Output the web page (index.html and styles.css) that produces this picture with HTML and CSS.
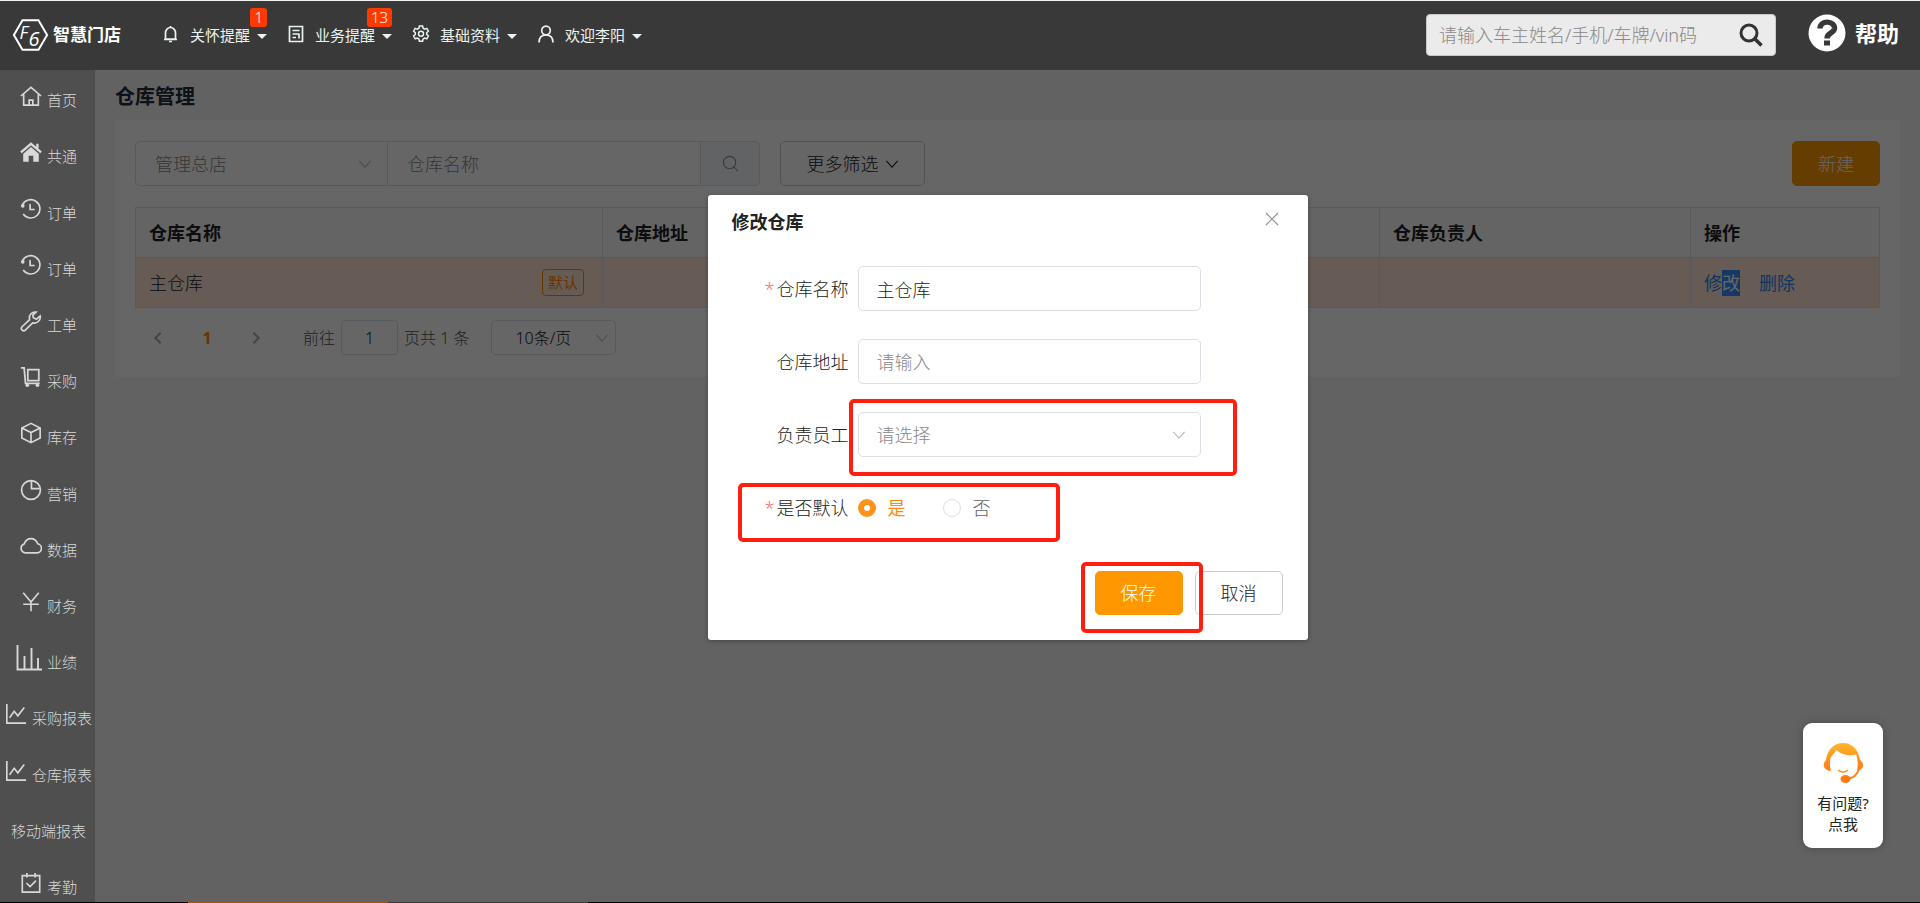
FILE: index.html
```html
<!DOCTYPE html>
<html lang="zh-CN">
<head>
<meta charset="utf-8">
<title>仓库管理</title>
<link rel="stylesheet" href="styles.css">
</head>
<body>
<svg class="sprite" aria-hidden="true">
  <symbol id="chevron" viewBox="0 0 16 16"><path d="M1.5 4.5 8 11.5 14.5 4.5" fill="none" stroke="currentColor" stroke-width="1.3"/></symbol>
  <symbol id="chevron-bold" viewBox="0 0 16 16"><path d="M2 5 8 11 14 5" fill="none" stroke="currentColor" stroke-width="2.4"/></symbol>
  <symbol id="history" viewBox="0 0 24 24"><path d="M2.5 8A10 10 0 1 1 3.5 17.5" fill="none" stroke="currentColor" stroke-width="1.8"/><path d="M11 6.5V12.5H16" fill="none" stroke="currentColor" stroke-width="1.8"/><circle cx="3" cy="8.5" r="2" fill="currentColor"/></symbol>
  <symbol id="trend" viewBox="0 0 24 24"><path d="M2 1V22H23M5 16 10 9 14 14 21 5" fill="none" stroke="currentColor" stroke-width="1.8"/></symbol>
</svg>
<header class="topbar">
  <a class="brand" href="#">
    <svg class="brand-mark" viewBox="0 0 36 32"><path d="M10 1.2H26L34.6 16 26 30.8H10L1.4 16Z" fill="none" stroke="#fff" stroke-width="2"/><text x="7" y="20" font-size="18">F</text><text x="16" y="27" font-size="20">6</text></svg>
    <span>智慧门店</span>
  </a>
  <nav class="menu">
    <a class="menu-item" href="#"><svg viewBox="0 0 18 18"><path d="M3.5 14V8a5 5.500 0 0 1 10 0V14ZM2 14.500H15M8.500 1V2.500M7 16.500H10" fill="none" stroke="currentColor" stroke-width="1.700"/></svg><span>关怀提醒</span><i class="caret"></i><b class="badge">1</b></a>
    <a class="menu-item" href="#"><svg viewBox="0 0 18 18"><path d="M2.500 1.500H15.500V16.500H2.500ZM5.500 5.500H12.500M5.500 9H12.500M5.500 12.500H9M12 9V13.500" fill="none" stroke="currentColor" stroke-width="1.700"/></svg><span>业务提醒</span><i class="caret"></i><b class="badge">13</b></a>
    <a class="menu-item" href="#"><svg viewBox="0 0 18 18"><path d="M7.400 1h3.200l.5 2.200 1.500.9 2.200-.7 1.600 2.800-1.700 1.500v1.800l1.700 1.500-1.600 2.800-2.200-.7-1.500.9-.5 2.200H7.400l-.5-2.200-1.500-.9-2.200.7-1.600-2.800 1.700-1.500V7.700L1.600 6.200l1.600-2.800 2.200.7 1.500-.9Z" fill="none" stroke="currentColor" stroke-width="1.500"/><circle cx="9" cy="8.700" r="2.500" fill="none" stroke="currentColor" stroke-width="1.500"/></svg><span>基础资料</span><i class="caret"></i></a>
    <a class="menu-item" href="#"><svg viewBox="0 0 18 18"><circle cx="9" cy="5.500" r="4.300" fill="none" stroke="currentColor" stroke-width="1.700"/><path d="M2 17.500C2 12.500 5 10 9 10s7 2.500 7 7.500" fill="none" stroke="currentColor" stroke-width="1.700"/></svg><span>欢迎李阳</span><i class="caret"></i></a>
  </nav>
  <form class="finder">
    <input type="text" aria-label="搜索" placeholder="请输入车主姓名/手机/车牌/vin码">
    <button type="button" aria-label="搜索"><svg viewBox="0 0 24 24"><circle cx="10" cy="10" r="8" fill="none" stroke="currentColor" stroke-width="3"/><path d="M15.500 15.500 22.500 22.500" stroke="currentColor" stroke-width="3.500"/></svg></button>
  </form>
  <a class="help" href="#"><svg viewBox="0 0 38 38"><circle cx="19" cy="19" r="18.500" fill="#fff"/><path d="M12 14.500C12 5.500 27 6.500 26.500 14.500 26 19.500 19 18.500 19 24.500" fill="none" stroke="#393939" stroke-width="5.400"/><rect x="16" y="26.500" width="6" height="5" fill="#393939"/></svg><span>帮助</span></a>
</header>
<div class="workspace">
  <aside class="sidebar">
    <a href="#"><svg viewBox="0 0 24 24"><path d="M1 12 12 2.500 23 12M4 10V22H20V10M10 22V16.500H14V22" fill="none" stroke="currentColor" stroke-width="1.800"/></svg><span>首页</span></a>
    <a href="#"><svg viewBox="0 0 24 24"><path d="M12 6.500 20.500 14V22.500H14.500V16H9.500V22.500H3.500V14Z" fill="currentColor"/><path d="M1 12.500 12 3 23 12.500M19 3V8" fill="none" stroke="currentColor" stroke-width="2.600"/></svg><span>共通</span></a>
    <a href="#"><svg><use href="#history"/></svg><span>订单</span></a>
    <a href="#"><svg><use href="#history"/></svg><span>订单</span></a>
    <a href="#"><svg viewBox="0 0 24 24"><path d="M17.500 2.200A6.500 6.500 0 0 0 10.500 10.500L2 18.500a2.600 2.600 0 0 0 3.800 3.500L13.800 14A6.500 6.500 0 0 0 22 6.500L18 10 14.500 8.500 14 5.500Z" fill="none" stroke="currentColor" stroke-width="1.800"/></svg><span>工单</span></a>
    <a href="#"><svg viewBox="0 0 24 24"><path d="M1 2H4.500L6 19H21.500M8.500 4H20.500V16H8.500Z" fill="none" stroke="currentColor" stroke-width="1.900"/><circle cx="8" cy="21" r="2" fill="currentColor"/><circle cx="19" cy="21" r="2" fill="currentColor"/></svg><span>采购</span></a>
    <a href="#"><svg viewBox="0 0 24 24"><path d="M12 1.500 22 6.500V17.500L12 22.500 2 17.500V6.500ZM2 6.500 12 11.500 22 6.500M12 11.500V22.500" fill="none" stroke="currentColor" stroke-width="1.800"/></svg><span>库存</span></a>
    <a href="#"><svg viewBox="0 0 24 24"><circle cx="12" cy="12" r="10.300" fill="none" stroke="currentColor" stroke-width="1.800"/><path d="M12.500 2V10.500H21.500" fill="none" stroke="currentColor" stroke-width="1.800"/></svg><span>营销</span></a>
    <a href="#"><svg viewBox="0 0 24 24"><path d="M6 19.500A5 5 0 0 1 4.500 9.800C6 6 9 4 12 4s6 2 7.300 5.600A5 5 0 0 1 18 19.500Z" fill="none" stroke="currentColor" stroke-width="1.800"/></svg><span>数据</span></a>
    <a href="#"><svg viewBox="0 0 24 24"><path d="M3.500 2 12 12 20.500 2M12 12V22M3.500 14.500H20.500" fill="none" stroke="currentColor" stroke-width="1.800"/></svg><span>财务</span></a>
    <a href="#"><svg class="wide" viewBox="0 0 26 26"><path d="M1.500 0V24.500H26M8.500 24V11M15.500 24V3M22 24V13" fill="none" stroke="currentColor" stroke-width="1.900"/></svg><span>业绩</span></a>
    <a href="#"><svg><use href="#trend"/></svg><span>采购报表</span></a>
    <a href="#"><svg><use href="#trend"/></svg><span>仓库报表</span></a>
    <a class="text-only" href="#"><span>移动端报表</span></a>
    <a href="#"><svg viewBox="0 0 24 24"><path d="M2.500 4H21.500V22H2.500ZM7.500 1V6M16.500 1V6M7 12 11 16 17.500 9.500" fill="none" stroke="currentColor" stroke-width="1.800"/></svg><span>考勤</span></a>
  </aside>
  <div class="stage">
    <main class="page">
      <h1>仓库管理</h1>
      <section class="panel">
        <div class="filters">
          <div class="picker shop"><select aria-label="门店"><option>管理总店</option></select><svg><use href="#chevron"/></svg></div>
          <input class="keyword" type="text" aria-label="仓库名称" placeholder="仓库名称">
          <button class="query" type="button" aria-label="查询"><svg viewBox="0 0 18 18"><circle cx="8" cy="8" r="6.500" fill="none" stroke="currentColor" stroke-width="1.200"/><path d="M12.500 12.500 17 17" stroke="currentColor" stroke-width="1.200"/></svg></button>
          <button class="btn more" type="button">更多筛选<svg><use href="#chevron"/></svg></button>
          <button class="btn primary create" type="button">新建</button>
        </div>
        <table class="grid">
          <colgroup><col class="c-name"><col class="c-address"><col class="c-owner"><col class="c-action"></colgroup>
          <thead><tr><th>仓库名称</th><th>仓库地址</th><th>仓库负责人</th><th>操作</th></tr></thead>
          <tbody><tr><td><div class="name-cell"><span>主仓库</span><span class="tag">默认</span></div></td><td></td><td></td><td><a href="#">修<mark>改</mark></a><a href="#">删除</a></td></tr></tbody>
        </table>
        <div class="pager">
          <button type="button" aria-label="上一页"><svg class="prev"><use href="#chevron-bold"/></svg></button>
          <b>1</b>
          <button type="button" aria-label="下一页"><svg class="next"><use href="#chevron-bold"/></svg></button>
          <label class="jump">前往<input type="text" value="1">页共 1 条</label>
          <div class="picker size"><select aria-label="每页条数"><option>10条/页</option></select><svg><use href="#chevron"/></svg></div>
        </div>
      </section>
    </main>
    <div class="mask">
      <form class="dialog" role="dialog" aria-labelledby="dialog-title">
        <div class="dialog-head"><h2 id="dialog-title">修改仓库</h2><button type="button" aria-label="关闭"><svg viewBox="0 0 14 14"><path d="M1 1 13 13M13 1 1 13" stroke="currentColor" stroke-width="1.200"/></svg></button></div>
        <div class="fields">
          <div class="field"><label class="required" for="name">仓库名称</label><input id="name" type="text" value="主仓库"></div>
          <div class="field"><label for="address">仓库地址</label><input id="address" type="text" placeholder="请输入"></div>
          <div class="field"><label for="owner">负责员工</label><div class="picker"><select id="owner"><option>请选择</option></select><svg><use href="#chevron"/></svg></div><i class="outline outline-owner"></i></div>
          <div class="field" role="radiogroup" aria-labelledby="default-label"><span id="default-label" class="label required">是否默认</span>
            <label class="radio"><input type="radio" name="default" checked><span>是</span></label>
            <label class="radio"><input type="radio" name="default"><span>否</span></label>
            <i class="outline outline-default"></i></div>
        </div>
        <div class="dialog-foot"><button class="btn primary" type="button">保存</button><button class="btn" type="button">取消</button><i class="outline outline-save"></i></div>
      </form>
    </div>
    <a class="support" href="#"><svg viewBox="0 0 40 40"><defs><linearGradient id="warm" x1="0" y1="0" x2="0" y2="1"><stop offset="0" stop-color="#ffb52e"/><stop offset="1" stop-color="#ff7a12"/></linearGradient></defs><path d="M3 17C4 7 11 0 20 0s16 7 17 17c4 2 4 8 0 10l-3 1c1-5 1-11-1-17-5 3-14 1-20-4-1 4-6 5-6 12 0 4 0 6 1 9-6 0-10-6-5-11Z" fill="url(#warm)"/><path d="M15 27q5 4 10 0" fill="none" stroke="#ff962c" stroke-width="1.500"/><path d="M36 26C34 32 31 35 25 35.500" fill="none" stroke="#ff8618" stroke-width="2"/><ellipse cx="22.500" cy="36" rx="5" ry="4" fill="#ff7a12"/></svg><span>有问题?</span><span>点我</span></a>
  </div>
</div>
<footer class="edge"><i></i><i></i></footer>
</body>
</html>
```
FILE: styles.css
```css
* { box-sizing: border-box; }
body {
  margin: 0;
  height: 100vh;
  display: flex;
  flex-direction: column;
  overflow: hidden;
  font: 300 18px/24px "Noto Sans", "Noto Sans CJK SC", sans-serif;
  color: #222;
}
a { color: inherit; text-decoration: none; }
button, input, select { font: inherit; color: inherit; }
button { border: 0; padding: 0; background: none; cursor: pointer; }
svg { display: block; flex: none; }
.sprite { position: absolute; width: 0; height: 0; }

.topbar {
  flex: none;
  height: 70px;
  border-top: 1px solid #f2f2f2;
  background: #393939;
  color: #fff;
  display: flex;
  align-items: center;
  padding: 0 21px 2px 12px;
}
.brand { display: flex; align-items: center; gap: 4px; font-size: 17px; font-weight: 700; width: 150px; }
.brand-mark { width: 37px; height: 32px; }
.brand-mark text { fill: #fff; font-weight: 400; font-style: italic; font-family: "Open Sans", sans-serif; }
.menu { display: flex; gap: 20px; font-size: 15px; font-weight: 400; color: #e9f3f1; }
.menu-item { position: relative; display: flex; align-items: center; }
.menu-item svg { width: 18px; height: 18px; margin-right: 10px; margin-bottom: 2px; }
.caret { margin: 4px 0 0 7px; border: 5px solid transparent; border-top-color: currentColor; border-bottom: 0; }
.badge { position: absolute; right: 0; bottom: 20px; padding: 0 4px; border-radius: 3px; background: #ff3a00; color: #fff; font-size: 15px; font-weight: 300; line-height: 19px; }
.finder { margin-left: auto; display: flex; width: 350px; height: 42px; padding-right: 12px; border: 1px solid #c8c8c8; border-radius: 4px; background: #ebebeb; align-items: center; }
.finder input { flex: 1; min-width: 0; border: 0; background: none; padding: 0 12px; outline: 0; }
.finder input::placeholder { color: #888; opacity: 1; }
.finder button { color: #333; }
.finder svg { width: 24px; height: 24px; }
.help { display: flex; align-items: center; gap: 9px; margin-left: 32px; margin-bottom: 4px; font-size: 22px; font-weight: 700; }
.help svg { width: 38px; height: 38px; }

.workspace { flex: 1; min-height: 0; display: flex; }
.sidebar { flex: none; width: 95px; height: calc(100% + 13px); padding-top: 2px; background: #4f4f4f; color: #d8d8d8; font-size: 15px; display: flex; flex-direction: column; }
.sidebar a { flex: 1; display: flex; align-items: center; justify-content: center; gap: 5px; white-space: nowrap; padding-left: 2px; }
.sidebar svg { width: 22px; height: 22px; margin-bottom: 8px; }
.sidebar .wide { width: 26px; height: 26px; margin-left: -4px; }
.stage { position: relative; flex: 1; min-width: 0; background: #f6f6f6; }

.page { padding: 15px 20px; }
h1 { margin: 0 0 11px; font-size: 20px; line-height: 24px; font-weight: 700; color: #1f2d3d; }
.panel { background: #fff; padding: 21px 20px 22px; }
.filters { display: flex; align-items: center; margin-bottom: 21px; }
.picker { position: relative; color: #888; }
.picker select { appearance: none; width: 100%; height: 45px; padding: 0 19px; border: 1px solid #dcdfe6; border-radius: 5px; background: #fff; opacity: 1; }
.picker svg { position: absolute; right: 15px; top: 50%; width: 14px; height: 14px; margin-top: -7px; color: #b8bcc4; pointer-events: none; }
.shop { width: 252px; }
.shop select { border-radius: 5px 0 0 5px; border-right: 0; }
.keyword { width: 313px; height: 45px; padding: 0 19px; border: 1px solid #dcdfe6; border-right: 0; }
.keyword::placeholder, .field input::placeholder { color: #888; opacity: 1; }
.query { width: 60px; height: 45px; border: 1px solid #dcdfe6; border-radius: 0 5px 5px 0; background: #f5f7fa; color: #909399; display: grid; place-items: center; }
.query svg { width: 17px; height: 17px; }
.btn { display: flex; align-items: center; justify-content: center; gap: 6px; width: 88px; height: 45px; border: 1px solid #ccc; border-radius: 5px; background: #fff; }
.btn.more { width: 145px; margin-left: 20px; }
.more svg { width: 14px; height: 14px; }
.btn.primary { border-color: #ff9800; background: #ff9800; color: #fff; }
.create { margin-left: auto; }

.grid { width: 100%; border-collapse: collapse; table-layout: fixed; }
.c-name { width: 467px; }
.c-owner { width: 311px; }
.c-action { width: 189px; }
.grid th, .grid td { height: 50px; padding: 0 13px; border: 1px solid #dcdfe6; text-align: left; }
.grid th { background: #fafafa; font-weight: 700; }
.grid td { background: #ffe6d5; }
.grid td a { color: #2d85f0; margin-right: 19px; font-weight: 400; }
.grid mark { background: #3390ff; color: #fff; padding: 1px 0; }
.name-cell { display: flex; justify-content: space-between; align-items: center; padding-right: 5px; }
.tag { border: 1px solid #ff8500; border-radius: 4px; padding: 0 5px; color: #ff8500; font-size: 15px; line-height: 25px; font-weight: 400; }

.pager { display: flex; align-items: center; margin-top: 12px; padding-left: 16px; font-size: 16px; color: #555; }
.pager svg { width: 14px; height: 14px; color: #a8abb2; }
.pager b { width: 84px; text-align: center; color: #ff8500; font-weight: 700; }
.prev { transform: rotate(90deg); }
.next { transform: rotate(-90deg); }
.jump { display: flex; align-items: center; gap: 6px; margin-left: 40px; }
.jump input { width: 57px; height: 35px; border: 1px solid #dcdfe6; border-radius: 4px; text-align: center; color: #222; }
.size { width: 125px; margin-left: 22px; }
.size select { height: 35px; padding: 0 23px; color: #222; }
.pager .size svg { right: 7px; color: #c0c4cc; }

.mask { position: absolute; inset: 0; background: rgba(0, 0, 0, .6); display: flex; justify-content: center; align-items: flex-start; padding-top: 125px; }
.dialog { width: 600px; padding: 15px 24px 25px; border-radius: 3px; background: #fff; box-shadow: 0 1px 4px rgba(0, 0, 0, .3); }
.dialog-head { display: flex; justify-content: space-between; align-items: flex-start; }
h2 { margin: 0; font-size: 18px; line-height: 24px; font-weight: 700; }
.dialog-head button { margin: 2px 5px; color: #909399; }
.dialog-head svg { width: 14px; height: 14px; }
.fields { display: grid; gap: 28px; margin: 32px 83px 41px 0; }
.field { position: relative; display: flex; align-items: center; min-height: 45px; }
.field > label:first-child, .label { width: 126px; padding-right: 9px; text-align: right; }
.required::before { content: "*"; color: #f56c6c; margin-right: 2px; }
.field > input, .field .picker { flex: 1; min-width: 0; height: 45px; }
.field > input { border: 1px solid #dcdfe6; border-radius: 5px; padding: 0 18px; }
.field .picker select { padding: 0 18px; }
.radio { display: flex; align-items: center; gap: 12px; margin-right: 37px; color: #606266; }
.radio input { appearance: none; width: 18px; height: 18px; margin: 0; border: 1px solid #dcdfe6; border-radius: 50%; }
.radio input:checked { border: 6px solid #ff9219; }
.radio input:checked + span { color: #ff8a0a; font-weight: 400; }
.dialog-foot { position: relative; display: flex; justify-content: flex-end; gap: 12px; margin-right: 1px; }
.dialog-foot .btn { height: 44px; }
.outline { position: absolute; border: 4px solid #ff1e0f; border-radius: 5px; pointer-events: none; }
.outline-owner { inset: -13px -36px -19px 117px; }
.outline-default { left: 6px; top: -2px; width: 322px; height: 59px; }
.outline-save { right: 80px; top: -9px; width: 122px; height: 71px; }

.support { position: absolute; right: 37px; bottom: 54px; width: 80px; height: 125px; border-radius: 9px; background: #fff; box-shadow: 0 0 8px rgba(0, 0, 0, .25); display: flex; flex-direction: column; align-items: center; padding-top: 20px; font-size: 15px; line-height: 21px; font-weight: 400; }
.support svg { width: 40px; height: 40px; margin-bottom: 10px; }
.edge { position: relative; flex: none; display: flex; height: 1px; padding-left: 188px; background: #000; }
.edge i { width: 200px; background: #a8560f; }
.edge i + i { background: #3a3a3a; }
```
